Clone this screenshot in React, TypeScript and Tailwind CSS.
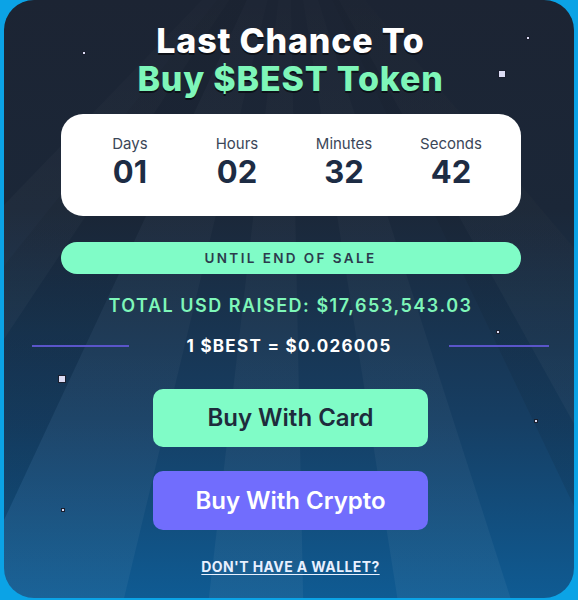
import React from 'react';

const countdown = [
  { label: 'Days', value: '01' },
  { label: 'Hours', value: '02' },
  { label: 'Minutes', value: '32' },
  { label: 'Seconds', value: '42' },
];

const stars = [
  { x: 78, y: 51, s: 4 },
  { x: 522, y: 36, s: 4 },
  { x: 494, y: 70, s: 8 },
  { x: 492, y: 330, s: 4 },
  { x: 54, y: 375, s: 8 },
  { x: 530, y: 419, s: 4 },
  { x: 57, y: 508, s: 4 },
];

function Rays() {
  // beams fanning out from above the top centre, fading in towards the bottom
  const beams: [number, number][] = [
    [-420, -200],
    [-56, 110],
    [200, 300],
    [400, 520],
    [690, 900],
  ];
  return (
    <svg className="absolute inset-0 h-full w-full" viewBox="0 0 570 598" preserveAspectRatio="none">
      <defs>
        <linearGradient id="beam" x1="0" y1="0" x2="0" y2="1">
          <stop offset="0" stopColor="#ffffff" stopOpacity="0.005" />
          <stop offset="1" stopColor="#ffffff" stopOpacity="0.05" />
        </linearGradient>
        <linearGradient id="shade" x1="0" y1="0" x2="0" y2="1">
          <stop offset="0" stopColor="#000000" stopOpacity="0.02" />
          <stop offset="1" stopColor="#000000" stopOpacity="0.1" />
        </linearGradient>
      </defs>
      {beams.map(([a, b], i) => (
        <polygon key={i} points={`285,-90 ${a},640 ${b},640`} fill="url(#beam)" />
      ))}
      <polygon points="285,-90 -300,640 -56,640" fill="url(#shade)" />
      <polygon points="285,-90 634,640 900,640" fill="url(#shade)" />
    </svg>
  );
}

export default function App() {
  return (
    <div className="h-[600px] w-[578px] bg-[#0ba3e6] px-1 pb-0.5 [font-family:Inter,'Noto_Sans',sans-serif]">
      <div className="relative h-full overflow-hidden rounded-[30px] bg-[linear-gradient(180deg,#1c2433_0%,#1b2738_35%,#163e63_70%,#0f5b93_100%)]">
        <Rays />
        {stars.map((st, i) => (
          <span
            key={i}
            className="absolute border border-[#1a1f2e] bg-[#dcdcf4]"
            style={{ left: st.x, top: st.y, width: st.s, height: st.s }}
          />
        ))}

        <div className="relative flex flex-col items-center pl-[3px] pt-[22px]">
          <h1 className="text-center text-[34px] font-extrabold leading-[38px] tracking-[0.8px] [text-shadow:0_2px_0_rgba(0,0,0,0.55)]">
            <span className="block text-white">Last Chance To</span>
            <span className="block text-[#7ef6b9]">Buy $BEST Token</span>
          </h1>

          <div className="mt-4 grid h-[102px] w-[460px] grid-cols-4 rounded-[22px] bg-white px-4 pt-[20px]">
            {countdown.map((c) => (
              <div key={c.label} className="flex flex-col items-center">
                <span className="text-[15px] leading-5 text-[#3b4658]">{c.label}</span>
                <span className="text-[31px] font-bold leading-[36px] text-[#1d2c44]">{c.value}</span>
              </div>
            ))}
          </div>

          <div className="mt-[26px] flex h-8 w-[460px] items-center justify-center rounded-full bg-[#80fcc7] text-[13.5px] font-semibold tracking-[2.4px] text-[#2c3b4d]">
            UNTIL END OF SALE
          </div>

          <p className="mt-[20px] text-[18px] font-semibold leading-6 tracking-[1.5px] text-[#7ef6b9]">
            TOTAL USD RAISED: $17,653,543.03
          </p>

          <div className="mt-[16px] flex w-full items-center justify-between px-[25px]">
            <span className="h-0.5 w-[97px] bg-[#5a55c9]" />
            <span className="text-[17px] font-bold leading-6 tracking-[1.3px] text-white">1 $BEST = $0.026005</span>
            <span className="h-0.5 w-[100px] bg-[#5a55c9]" />
          </div>

          <button className="mt-[31px] h-[58px] w-[275px] rounded-[10px] bg-[#80fcc7] text-[24px] font-semibold text-[#1e2b3c]">
            Buy With Card
          </button>
          <button className="mt-[24px] h-[59px] w-[275px] rounded-[10px] bg-[#716dfd] text-[24px] font-semibold text-white">
            Buy With Crypto
          </button>

          <a href="#" className="mt-[26px] text-[14px] font-bold uppercase tracking-[0.4px] text-[#e8f0ff] underline underline-offset-2">
            Don't have a wallet?
          </a>
        </div>
      </div>
    </div>
  );
}
